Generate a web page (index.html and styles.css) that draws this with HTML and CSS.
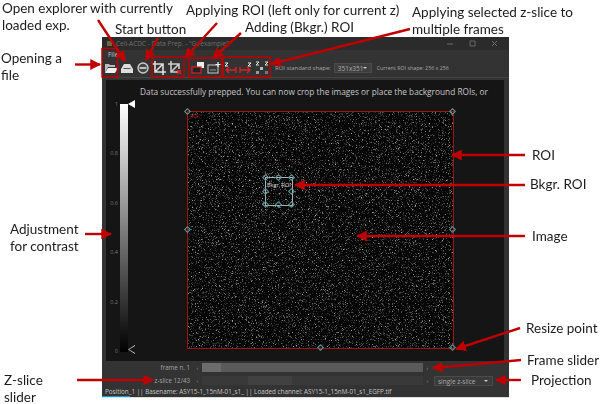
FILE: index.html
```html
<!DOCTYPE html>
<html lang="en">
<head>
    <meta charset="UTF-8">
    <title>Cell-ACDC Data Prep annotated</title>
    <link rel="stylesheet" href="styles.css">
</head>
<body>
<div class="stage">

    <!-- the application window -->
    <div class="window">
        <div class="titlebar">
            <span class="app-dot"></span>
            <span class="title">Cell-ACDC - Data Prep. - "G:/example"</span>
            <span class="win-btns">
                <svg width="50" height="10" viewBox="0 0 50 10"><path d="M0 5h6M23 2h5v5h-5zM45 2l5 5M50 2l-5 5" fill="none" stroke="#6a6a6a"/></svg>
            </span>
        </div>
        <div class="menubar"><span class="menu-item">File</span></div>
        <div class="toolbar">
            <svg class="tool" width="14" height="14" viewBox="0 0 14 14"><path d="M1 3h4l1 1h5v2H4L1 12z" fill="#bbb"/><path d="M4 7h10l-3 5H1z" fill="#eee"/></svg>
            <svg class="tool" width="14" height="14" viewBox="0 0 14 14"><path d="M4 3h6l3 5v4H1V8z" fill="#ddd"/><path d="M3 8h8l-1-1H4z" fill="#555"/></svg>
            <svg class="tool" width="14" height="14" viewBox="0 0 14 14"><circle cx="7" cy="7" r="5" fill="#444" stroke="#ccc" stroke-width="1.4"/><path d="M3.500 7h7" stroke="#ddd" stroke-width="1.6"/></svg>
            <svg class="tool" width="14" height="14" viewBox="0 0 14 14"><path d="M3 0v11h11M0 3h11v11M3 11L11 3" fill="none" stroke="#ddd" stroke-width="1.6"/></svg>
            <svg class="tool" width="14" height="14" viewBox="0 0 14 14"><path d="M3 0v11h7M0 3h11v5M3 11L11 3" fill="none" stroke="#ccc" stroke-width="1.6"/><path d="M9 9l4 4M13 9l-4 4" stroke="#e02020" stroke-width="1.6"/></svg>
            <span class="tool-sep"></span>
            <svg class="tool" width="14" height="14" viewBox="0 0 14 14"><rect x="6" y="1" width="7" height="6" fill="#eee"/><rect x="1" y="6" width="9" height="6" fill="#222" stroke="#e02020" stroke-width="1.2"/></svg>
            <svg class="tool" width="14" height="14" viewBox="0 0 14 14"><rect x="1" y="4" width="10" height="8" fill="#333" stroke="#ccc"/><path d="M3 9h6" stroke="#999"/><path d="M11 1v5M8.500 3.500h5" stroke="#eee" stroke-width="1.2"/></svg>
            <svg class="tool" width="14" height="14" viewBox="0 0 14 14"><path d="M2 2h3L2 5h3" fill="none" stroke="#eee"/><path d="M13 9H3M6 6L3 9l3 3M13 6v6" fill="none" stroke="#e02020" stroke-width="1.3"/></svg>
            <svg class="tool" width="14" height="14" viewBox="0 0 14 14"><path d="M9 2h3L9 5h3" fill="none" stroke="#eee"/><path d="M1 9h10M8 6l3 3-3 3M1 6v6" fill="none" stroke="#e02020" stroke-width="1.3"/></svg>
            <svg class="tool" width="14" height="14" viewBox="0 0 14 14"><path d="M1 1h3L1 4h3M10 1h3l-3 3h3" fill="none" stroke="#ddd"/><rect x="5" y="6" width="3" height="3" fill="#bbb"/><rect x="1" y="10" width="3" height="3" fill="#999"/><rect x="10" y="10" width="3" height="3" fill="#777"/></svg>
            <span class="tool-text tool-text-first">ROI standard shape:</span>
            <span class="combo combo-shape">351x351<i class="caret"></i></span>
            <span class="tool-text tool-text-last">Current ROI shape: 256 x 256</span>
        </div>

        <div class="plot">
            <p class="plot-msg">Data successfully prepped. You can now crop the images or place the background ROIs, or</p>
            <div class="plot-body">
                <div class="contrast">
                    <div class="ticks">
                        <span>1</span><span>0.8</span><span>0.6</span><span>0.4</span><span>0.2</span><span>0</span>
                    </div>
                    <div class="gradient"></div>
                    <div class="handles">
                        <i class="handle-top"></i>
                        <i class="handle-bottom"></i>
                    </div>
                </div>
                <div class="image">
                    <svg class="noise" width="265" height="236">
                        <filter id="grain">
                            <feTurbulence type="fractalNoise" baseFrequency="1.3" numOctaves="2" seed="4"/>
                            <feColorMatrix values="0 0 0 0 0.42  0 0 0 0 0.42  0 0 0 0 0.42  2.4 2.4 0 0 -2.6"/>
                        </filter>
                        <rect width="265" height="236" filter="url(#grain)"/>
                    </svg>
                    <span class="roi-name">ROI</span>
                    <div class="bkgr">
                        <span class="bkgr-name">Bkgr. ROI</span>
                        <i class="pt pt-tl"></i><i class="pt pt-tc"></i><i class="pt pt-tr"></i>
                        <i class="pt pt-ml"></i><i class="pt pt-mr"></i>
                        <i class="pt pt-bl"></i><i class="pt pt-bc"></i><i class="pt pt-br"></i>
                    </div>
                    <i class="pt pt-tl"></i><i class="pt pt-tr"></i>
                    <i class="pt pt-ml"></i><i class="pt pt-mr"></i>
                    <i class="pt pt-bc"></i><i class="pt pt-br"></i>
                </div>
            </div>
        </div>

        <div class="slider-row">
            <span class="row-label">frame n. 1</span>
            <div class="scroll scroll-frame"><b class="arrow">&#8249;</b><div class="track"><i class="thumb thumb-frame"></i></div><b class="arrow">&#8250;</b></div>
        </div>
        <div class="slider-row">
            <span class="row-label">z-slice 12/43</span>
            <div class="scroll scroll-z"><b class="arrow">&#8249;</b><div class="track"><i class="thumb thumb-z"></i></div><b class="arrow">&#8250;</b></div>
            <span class="combo combo-proj">single z-slice<i class="caret"></i></span>
        </div>
        <div class="statusbar">Position_1 || Basename: ASY15-1_15nM-01_s1_ || Loaded channel: ASY15-1_15nM-01_s1_EGFP.tif</div>
    </div>

    <!-- red annotation arrows -->
    <svg class="marks" width="602" height="404" viewBox="0 0 602 404">
        <defs>
            <marker id="head" viewBox="0 0 10 10" refX="9" refY="5" markerWidth="4.500" markerHeight="4.500" orient="auto">
                <path d="M0 0L10 5L0 10z" fill="#c00000"/>
            </marker>
        </defs>
        <g fill="none" stroke="#c00000" stroke-width="1.5">
            <rect x="102" y="48.500" width="15.500" height="28.500"/>
            <rect x="152" y="57" width="32" height="20"/>
            <rect x="189" y="58" width="33" height="19"/>
            <rect x="223" y="57" width="47" height="20"/>
        </g>
        <g fill="none" stroke="#c00000" stroke-width="2.400">
            <path d="M75 64.500H100" marker-end="url(#head)"/>
            <path d="M98 20L125 61" marker-end="url(#head)"/>
            <path d="M158 38L146 60" marker-end="url(#head)"/>
            <path d="M217 23L185 58" marker-end="url(#head)"/>
            <path d="M241 33L213 58" marker-end="url(#head)"/>
            <path d="M410 29L271 64" marker-end="url(#head)"/>
            <path d="M525 155H452" marker-end="url(#head)"/>
            <path d="M525 185H295" marker-end="url(#head)"/>
            <path d="M525 236H357" marker-end="url(#head)"/>
            <path d="M520 328L456 349" marker-end="url(#head)"/>
            <path d="M521 360L433 368" marker-end="url(#head)"/>
            <path d="M521 380H496" marker-end="url(#head)"/>
            <path d="M85 234H111" marker-end="url(#head)"/>
            <path d="M77 380H153" marker-end="url(#head)"/>
        </g>
    </svg>

    <!-- annotation labels -->
    <span class="note note-explorer">Open explorer with currently<br>loaded exp.</span>
    <span class="note note-start">Start button</span>
    <span class="note note-open">Opening a<br>file</span>
    <span class="note note-apply">Applying ROI (left only for current z)</span>
    <span class="note note-adding">Adding (Bkgr.) ROI</span>
    <span class="note note-zslice">Applying selected z-slice to<br>multiple frames</span>
    <span class="note note-roi">ROI</span>
    <span class="note note-bkgr">Bkgr. ROI</span>
    <span class="note note-image">Image</span>
    <span class="note note-resize">Resize point</span>
    <span class="note note-frame">Frame slider</span>
    <span class="note note-proj">Projection</span>
    <span class="note note-adjust">Adjustment<br>for contrast</span>
    <span class="note note-zslider">Z-slice<br>slider</span>
</div>
</body>
</html>
```

FILE: styles.css
```css
html, body {
    margin: 0;
    padding: 0;
    background-color: white;
}
.stage {
    position: relative;
    width: 602px;
    height: 404px;
    overflow: hidden;
    font-family: "Open Sans", sans-serif;
    filter: blur(0.35px);
}

/* window */
.window {
    margin: 37px 0 0 102px;
    width: 407px;
    height: 361px;
    background-color: #333;
    color: #bbb;
    font-size: 6.500px;
    display: flex;
    flex-direction: column;
    box-sizing: border-box;
    border-bottom: 1px solid #ddd;
}
.titlebar {
    height: 13px;
    background-color: #2b2b2b;
    display: flex;
    align-items: center;
    padding: 0 12px 0 5px;
    gap: 4px;
    color: #6f6f6f;
}
.app-dot {
    width: 5px;
    height: 5px;
    background-color: #6b6a3a;
}
.win-btns {
    margin-left: auto;
    display: flex;
}
.menubar {
    height: 9px;
    padding-left: 6px;
    display: flex;
    align-items: center;
    color: #ccc;
}
.toolbar {
    height: 18px;
    display: flex;
    align-items: center;
    padding-left: 2px;
    gap: 2px;
    border-bottom: 1px solid #444;
}
.tool {
    flex-shrink: 0;
}
.tool-sep {
    width: 5px;
}
.tool-text {
    color: #a8a8a8;
    font-size: 5.900px;
    white-space: nowrap;
}
.tool-text-first {
    margin-left: 4px;
}
.tool-text-last {
    font-size: 5.300px;
}
.combo {
    position: relative;
    background-color: #3f3f3f;
    border: 1px solid #4a4a4a;
    color: #aaa;
    height: 10px;
    line-height: 9px;
    padding-left: 3px;
    box-sizing: border-box;
    white-space: nowrap;
}
.combo-shape {
    width: 38px;
    margin: 0 3px 0 1px;
}
.combo-proj {
    width: 59px;
    margin-left: 2px;
    background-color: #3a3a3a;
}
.caret {
    position: absolute;
    right: 4px;
    top: 3px;
    border-left: 2.500px solid transparent;
    border-right: 2.500px solid transparent;
    border-top: 2.500px solid #ccc;
}

/* plot */
.plot {
    margin: 2px 5px 0 4px;
    height: 281px;
    background-color: #151515;
    display: flex;
    flex-direction: column;
}
.plot-msg {
    margin: 6px 0 0 34px;
    height: 16px;
    font-size: 8.300px;
    line-height: 11px;
    color: #c8c8c8;
    white-space: nowrap;
}
.plot-body {
    display: flex;
}
.contrast {
    width: 82px;
    display: flex;
    padding-top: 2px;
}
.ticks {
    width: 14px;
    height: 252px;
    box-sizing: border-box;
    display: flex;
    flex-direction: column;
    justify-content: space-between;
    align-items: flex-end;
    color: #777;
    font-size: 5.500px;
    padding-right: 2px;
    line-height: 5px;
    margin-top: -2px;
}
.gradient {
    width: 8px;
    height: 248px;
    background: linear-gradient(#fff, #000);
}
.handles {
    width: 8px;
    height: 254px;
    display: flex;
    flex-direction: column;
    justify-content: space-between;
    margin-top: -4px;
}
.handle-top {
    width: 0;
    border-top: 4px solid transparent;
    border-bottom: 4px solid transparent;
    border-right: 7px solid #fff;
}
.handle-bottom {
    width: 7px;
    height: 9px;
    background: #ccc;
    clip-path: polygon(100% 0, 0 50%, 100% 100%, 100% 88%, 16% 50%, 100% 12%);
}
.image {
    position: relative;
    width: 265px;
    height: 236px;
    margin-top: 10px;
    background-color: #060606;
    outline: 1px solid #a01414;
}
.noise {
    display: block;
}
.roi-name {
    position: absolute;
    left: 2px;
    top: 1px;
    font-size: 5px;
    color: #c02020;
}
.bkgr {
    position: absolute;
    left: 77px;
    top: 65px;
    width: 28px;
    height: 29px;
    border: 1px solid #a8b4b4;
    box-sizing: border-box;
}
.bkgr-name {
    position: absolute;
    left: 1px;
    top: 3px;
    font-size: 5.500px;
    color: #d8d8d8;
    white-space: nowrap;
}
.pt {
    position: absolute;
    width: 5px;
    height: 5px;
    margin: -3px 0 0 -3px;
    box-sizing: border-box;
    border: 1px solid #5f9a9a;
    transform: rotate(45deg);
}
.pt-tl { left: 0; top: 0; }
.pt-tc { left: 50%; top: 0; }
.pt-tr { left: 100%; top: 0; }
.pt-ml { left: 0; top: 50%; }
.pt-mr { left: 100%; top: 50%; }
.pt-bl { left: 0; top: 100%; }
.pt-bc { left: 50%; top: 100%; }
.pt-br { left: 100%; top: 100%; }

/* sliders */
.slider-row {
    height: 13px;
    display: flex;
    align-items: center;
}
.row-label {
    width: 88px;
    text-align: right;
    color: #a5a5a5;
    font-size: 6.200px;
    white-space: nowrap;
    flex-shrink: 0;
}
.scroll {
    display: flex;
    align-items: center;
    width: 239px;
    height: 9px;
    margin-left: 3px;
}
.arrow {
    width: 9px;
    text-align: center;
    font-size: 6px;
    font-weight: normal;
    color: #999;
    flex-shrink: 0;
}
.track {
    flex: 1;
    height: 9px;
    display: flex;
}
.scroll-frame .track {
    background-color: #5a5a5a;
}
.scroll-z .track {
    background-color: #393939;
}
.thumb {
    height: 9px;
}
.thumb-frame {
    width: 19px;
    background-color: #6c6c6c;
}
.thumb-z {
    width: 44px;
    margin-left: 46px;
    background-color: #414141;
}
.statusbar {
    margin-top: auto;
    height: 10px;
    line-height: 9px;
    padding-left: 3px;
    font-size: 6.300px;
    color: #c4c4c4;
    white-space: nowrap;
    background: linear-gradient(#00a0e0, #00a0e0) left bottom / 28px 1px no-repeat;
}

/* annotations */
.marks {
    position: absolute;
    left: 0;
    top: 0;
}
.note {
    position: absolute;
    font-family: Lato, sans-serif;
    font-size: 13.500px;
    line-height: 17px;
    color: #1c1c1c;
    white-space: nowrap;
}
.note-explorer { left: 2px; top: 0; }
.note-start { left: 115px; top: 21px; }
.note-open { left: 1px; top: 50px; }
.note-apply { left: 186px; top: 2px; }
.note-adding { left: 245px; top: 19px; }
.note-zslice { left: 412px; top: 4px; }
.note-roi { left: 532px; top: 147px; }
.note-bkgr { left: 530px; top: 176px; }
.note-image { left: 532px; top: 228px; }
.note-resize { left: 526px; top: 320px; }
.note-frame { left: 527px; top: 352px; }
.note-proj { left: 531px; top: 372px; }
.note-adjust { left: 10px; top: 221px; }
.note-zslider { left: 4px; top: 372px; }
```
